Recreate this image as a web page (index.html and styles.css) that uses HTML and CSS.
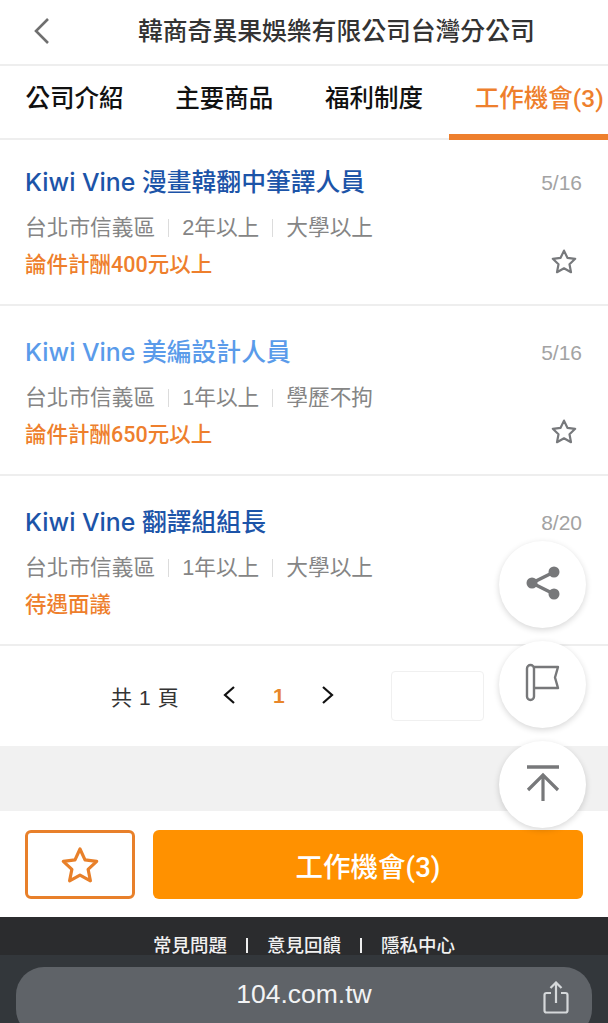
FILE: index.html
```html
<!DOCTYPE html>
<html lang="zh-Hant">
<head>
<meta charset="utf-8">
<title>韓商奇異果娛樂有限公司台灣分公司</title>
<link rel="stylesheet" href="styles.css">
</head>
<body>
<div class="page">
  <header class="topbar">
    <svg class="back" width="18" height="28" viewBox="0 0 18 28"><path d="M15 2 3 14l12 12" fill="none" stroke="#6f6f6f" stroke-width="2.6"/></svg>
    <h1 class="title">韓商奇異果娛樂有限公司台灣分公司</h1>
  </header>
  <nav class="tabs">
    <a class="tab">公司介紹</a>
    <a class="tab">主要商品</a>
    <a class="tab">福利制度</a>
    <a class="tab active">工作機會(3)</a>
  </nav>
  <section class="jobs">
    <article class="job">
      <div class="job-head"><h2 class="job-title">Kiwi Vine 漫畫韓翻中筆譯人員</h2><span class="date">5/16</span></div>
      <div class="meta"><span>台北市信義區</span><i class="sep"></i><span>2年以上</span><i class="sep"></i><span>大學以上</span></div>
      <div class="job-foot"><span class="pay">論件計酬400元以上</span>
        <svg class="star" width="28" height="28" viewBox="0 0 28 28"><path d="M14 2.6l3.4 7.2 7.8 1-5.7 5.5 1.5 7.9-7-3.9-7 3.9 1.5-7.9-5.7-5.5 7.8-1z" fill="none" stroke="#77797c" stroke-width="2.2" stroke-linejoin="round"/></svg>
      </div>
    </article>
    <article class="job">
      <div class="job-head"><h2 class="job-title visited">Kiwi Vine 美編設計人員</h2><span class="date">5/16</span></div>
      <div class="meta"><span>台北市信義區</span><i class="sep"></i><span>1年以上</span><i class="sep"></i><span>學歷不拘</span></div>
      <div class="job-foot"><span class="pay">論件計酬650元以上</span>
        <svg class="star" width="28" height="28" viewBox="0 0 28 28"><path d="M14 2.6l3.4 7.2 7.8 1-5.7 5.5 1.5 7.9-7-3.9-7 3.9 1.5-7.9-5.7-5.5 7.8-1z" fill="none" stroke="#77797c" stroke-width="2.2" stroke-linejoin="round"/></svg>
      </div>
    </article>
    <article class="job">
      <div class="job-head"><h2 class="job-title">Kiwi Vine 翻譯組組長</h2><span class="date">8/20</span></div>
      <div class="meta"><span>台北市信義區</span><i class="sep"></i><span>1年以上</span><i class="sep"></i><span>大學以上</span></div>
      <div class="job-foot"><span class="pay">待遇面議</span></div>
    </article>
  </section>
  <div class="pager">
    <span class="total">共 1 頁</span>
    <svg class="chev" width="14" height="20" viewBox="0 0 14 20"><path d="M12 2 3 10l9 8" fill="none" stroke="#111" stroke-width="2.2"/></svg>
    <span class="current">1</span>
    <svg class="chev" width="14" height="20" viewBox="0 0 14 20"><path d="M2 2l9 8-9 8" fill="none" stroke="#111" stroke-width="2.2"/></svg>
    <span class="page-input"></span>
  </div>
  <div class="spacer"></div>
  <div class="actions">
    <button class="fav">
      <svg width="40" height="38" viewBox="0 0 40 38"><path d="M20 3l5 10.800 11.700 1.500-8.600 8 2.300 11.500L20 29.100 9.600 34.800l2.300-11.500-8.600-8L15 13.800z" fill="none" stroke="#e8802a" stroke-width="3.200" stroke-linejoin="round"/></svg>
    </button>
    <button class="cta">工作機會(3)</button>
  </div>
  <footer class="footer">
    <a>常見問題</a><i class="bar"></i><a>意見回饋</a><i class="bar"></i><a>隱私中心</a>
  </footer>
  <div class="browser">
    <div class="url">
      <span>104.com.tw</span>
      <svg class="share-ios" width="26" height="34" viewBox="0 0 26 34"><path d="M8 12H3.500a2 2 0 0 0-2 2v15.500a2 2 0 0 0 2 2h19a2 2 0 0 0 2-2V14a2 2 0 0 0-2-2H18M13 22V2M7.500 7 13 1.500 18.500 7" fill="none" stroke="#d5d8da" stroke-width="2.200"/></svg>
    </div>
  </div>
  <div class="floats">
    <button class="fab">
      <svg width="38" height="36" viewBox="0 0 38 36"><path d="M30 7 8 18l22 11" fill="none" stroke="#77787a" stroke-width="3.500"/><circle cx="30" cy="7" r="5.500" fill="#77787a"/><circle cx="8" cy="18" r="5.500" fill="#77787a"/><circle cx="30" cy="29" r="5.500" fill="#77787a"/></svg>
    </button>
    <button class="fab">
      <svg width="36" height="40" viewBox="0 0 36 40"><rect x="2" y="2" width="7" height="35" rx="3.500" fill="none" stroke="#77787a" stroke-width="2.400"/><path d="M9 4h24l-3 10.500 3 10.500H9" fill="none" stroke="#77787a" stroke-width="2.400" stroke-linejoin="round"/></svg>
    </button>
    <button class="fab">
      <svg width="36" height="38" viewBox="0 0 36 38"><path d="M2 3h32" stroke="#77787a" stroke-width="3.500" fill="none"/><path d="M18 37V11M3 26l15-15 15 15" stroke="#77787a" stroke-width="3.200" fill="none"/></svg>
    </button>
  </div>
</div>
</body>
</html>
```
FILE: styles.css
```css
* { box-sizing: border-box; }
html, body { margin: 0; padding: 0; }
body {
  font-family: "Liberation Sans", "Noto Sans CJK TC", sans-serif;
  background: #fff;
  color: #222;
}
.page {
  position: relative;
  width: 608px;
  height: 1023px;
  overflow: hidden;
  display: flex;
  flex-direction: column;
}
.topbar {
  height: 66px;
  flex: none;
  border-bottom: 2px solid #eeeeee;
  display: flex;
  align-items: center;
  padding: 0 0 6px 33px;
}
.back { flex: none; margin: 3px 87px 0 0; }
.title {
  margin: 0;
  font-size: 24.800px;
  font-weight: 500;
  color: #333;
  white-space: nowrap;
}
.tabs {
  height: 74px;
  flex: none;
  display: flex;
  border-bottom: 2px solid #eeeeee;
}
.tab {
  padding: 13px 26px 0;
  font-size: 24.500px;
  font-weight: 500;
  color: #111;
  white-space: nowrap;
  margin-right: -0.250px;
}
.tab:first-child { padding-left: 25.500px; }
.tab.active {
  flex: 1;
  padding-right: 0;
  font-family: "Roboto", "Noto Sans CJK TC", sans-serif;
  color: #ee7f2d;
  border-bottom: 6px solid #ee7f2d;
  margin-bottom: -2px;
  height: 74px;
}
.jobs { flex: none; }
.job {
  height: 170px;
  border-bottom: 2px solid #eeeeee;
  padding: 28px 26px 0 25px;
}
.job:first-child { height: 166px; padding-top: 24px; }
.job-head { display: flex; justify-content: space-between; align-items: center; }
.job-title {
  margin: 0;
  font-family: "Inter", "Noto Sans CJK TC", sans-serif;
  font-size: 24.800px;
  line-height: 36px;
  font-weight: 500;
  color: #1c54a8;
}
.job-title.visited { color: #5a9bea; }
.date { font-size: 21px; color: #a3a3a3; margin-top: 2px; }
.meta {
  display: flex;
  align-items: center;
  margin-top: 12px;
  font-size: 21.700px;
  line-height: 32px;
  color: #858585;
}
.sep { width: 1px; height: 18px; background: #dcdcdc; margin: 0 13px; }
.job-foot { display: flex; justify-content: space-between; align-items: center; height: 32px; margin-top: 2px; }
.pay {
  font-family: "Roboto", "Noto Sans CJK TC", sans-serif;
  font-size: 21.500px;
  font-weight: 500;
  color: #ee7f2d;
}
.star { margin-right: 4px; }
.pager {
  height: 100px;
  flex: none;
  display: flex;
  align-items: center;
  padding-left: 111px;
}
.total { font-size: 21px; color: #333; letter-spacing: 0.600px; margin-right: 43px; }
.chev { flex: none; margin-bottom: 2px; }
.current { width: 85px; text-align: center; font-size: 21px; font-weight: 700; color: #e8862a; }
.page-input {
  width: 93px;
  height: 50px;
  margin-left: 56px;
  border: 1px solid #f0f0f0;
  border-radius: 4px;
}
.spacer { height: 65px; flex: none; background: #f1f1f1; }
.actions {
  height: 106px;
  flex: none;
  display: flex;
  gap: 18px;
  padding: 19px 25px 0;
}
.fav {
  width: 110px;
  height: 69px;
  padding: 0;
  background: #fff;
  border: 3px solid #e8802a;
  border-radius: 6px;
  display: flex;
  align-items: center;
  justify-content: center;
}
.cta {
  flex: 1;
  height: 69px;
  border: 0;
  border-radius: 6px;
  background: #ff9100;
  color: #fff;
  font: 500 27.500px "Roboto", "Noto Sans CJK TC", sans-serif;
}
.footer {
  height: 38px;
  flex: none;
  background: #2b2c2e;
  color: #f0f0f0;
  display: flex;
  justify-content: center;
  align-items: flex-start;
  padding-top: 17px;
  font-size: 18.500px;
  font-weight: 500;
  line-height: 24px;
  overflow: hidden;
}
.bar { width: 2px; height: 15px; margin: 4px 19px 0; background: #eeeeee; }
.browser {
  height: 68px;
  flex: none;
  background: #33373b;
  padding: 12px 16px 0;
}
.url {
  position: relative;
  height: 70px;
  border-radius: 28px;
  background: #5f6368;
  color: #f2f3f4;
  font-size: 26.500px;
  line-height: 54px;
  text-align: center;
}
.share-ios { position: absolute; right: 23px; top: 14px; }
.floats {
  position: absolute;
  left: 499px;
  top: 541px;
  display: flex;
  flex-direction: column;
  gap: 13px;
}
.fab {
  width: 87px;
  height: 87px;
  padding: 0 0 3px;
  border: 0;
  border-radius: 50%;
  background: #fff;
  box-shadow: 0 2px 6px rgba(0, 0, 0, 0.16);
  display: flex;
  align-items: center;
  justify-content: center;
}
```
